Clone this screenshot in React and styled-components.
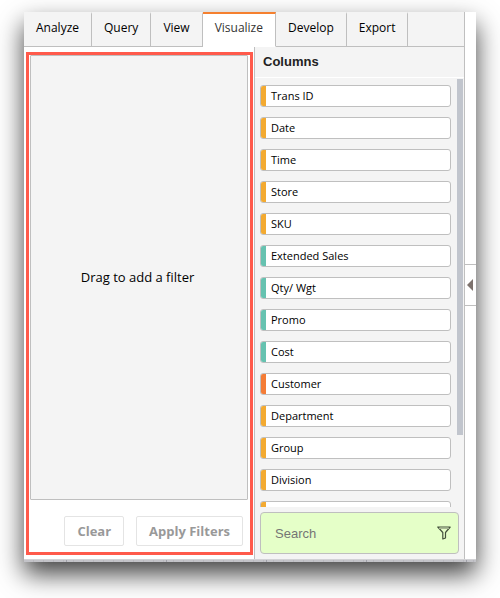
import React, { useState } from 'react';
import styled, { createGlobalStyle } from 'styled-components';

const GlobalStyle = createGlobalStyle`
  * {
    box-sizing: border-box;
  }

  body {
    margin: 0;
    background: #fff;
    color: #000;
    font-family: 'Open Sans', 'Noto Sans', sans-serif;
    font-size: 12px;
  }
`;

const line = '#bfbfbf';
const panel = '#f4f4f4';

const kinds = {
  attribute: '#f3aa31',
  measure: '#66c2b0',
  key: '#f47c36'
};

const Page = styled.div`
  display: flex;
  height: 100vh;
  padding: 12px 24px 36px;
`;

const Window = styled.div`
  flex: 1;
  min-width: 0;
  display: flex;
  flex-direction: column;
  background: #fff;
  box-shadow: 0 12px 24px rgba(0, 0, 0, 0.75);
`;

const Content = styled.div`
  flex: 1;
  min-height: 0;
  display: flex;
`;

const Main = styled.main`
  flex: 1;
  min-width: 0;
  display: flex;
  flex-direction: column;
  border-right: 1px solid ${line};
`;

const Tabs = styled.nav`
  display: flex;
  height: 35px;
  background: ${panel};

  &::after {
    content: '';
    flex: 1;
    border-bottom: 1px solid ${line};
  }
`;

const Tab = styled.button`
  padding: 0 12px 6px;
  border: 0;
  border-top: 2px solid ${p => (p.$active ? '#f5802f' : 'transparent')};
  border-right: 1px solid ${line};
  border-bottom: 1px solid ${p => (p.$active ? '#fff' : line)};
  background: ${p => (p.$active ? '#fff' : panel)};
  color: ${p => (p.$active ? '#333' : '#000')};
  font: inherit;
`;

const Panels = styled.div`
  flex: 1;
  min-height: 0;
  display: flex;
`;

const FilterPanel = styled.section`
  flex: 1;
  display: flex;
  flex-direction: column;
  margin: 5px 1px 4px 2px;
  border: 3px solid #ff5a4b;
`;

const DropZone = styled.div`
  flex: 1;
  display: flex;
  align-items: center;
  justify-content: center;
  margin: 0 2px 0 1px;
  padding: 0 3px 2px 0;
  border: 1px solid ${line};
  border-radius: 1px;
  background: ${panel};
  font-size: 13px;
`;

const Actions = styled.div`
  display: flex;
  justify-content: flex-end;
  gap: 12px;
  padding: 16px 7px 6px;
`;

const Button = styled.button`
  height: 30px;
  padding: 0 12px;
  border: 1px solid #e4e4e4;
  border-radius: 2px;
  background: #fff;
  color: #999;
  font: inherit;
  font-size: 13px;
  font-weight: 700;
`;

const ColumnPanel = styled.section`
  width: 210px;
  display: flex;
  flex-direction: column;
  border-left: 1px solid ${line};
  background: ${panel};
`;

const Heading = styled.h2`
  margin: 0;
  padding: 0 8px;
  border-bottom: 1px solid #fff;
  font: bold 13px/30px 'Liberation Sans', sans-serif;
  color: #222;
`;

const Scroller = styled.div`
  flex: 1;
  min-height: 0;
  display: flex;
`;

const List = styled.ul`
  flex: 1;
  margin: 0;
  padding: 7px 6px 0 5px;
  overflow-y: auto;
  scrollbar-width: none;
  list-style: none;
`;

const Thumb = styled.div`
  width: 6px;
  height: 83%;
  margin: 1px 1px 0 0;
  background: #c1c5cd;
`;

const Column = styled.li`
  display: flex;
  height: 22px;
  margin-bottom: 10px;
  border: 1px solid ${line};
  border-radius: 3px;
  background: #fff;
  overflow: hidden;
  font-size: 11px;
  line-height: 20px;

  &::before {
    content: '';
    width: 5px;
    margin-right: 5px;
    background: ${p => kinds[p.$kind]};
  }
`;

const SearchBox = styled.label`
  display: flex;
  align-items: center;
  height: 42px;
  margin: 5px;
  padding: 0 7px 0 14px;
  border: 1px solid ${line};
  border-radius: 4px;
  background: #e5ffc8;
`;

const SearchInput = styled.input`
  flex: 1;
  min-width: 0;
  padding: 0;
  border: 0;
  outline: 0;
  background: transparent;
  font: 13px 'Liberation Sans', sans-serif;

  &::placeholder {
    color: #757575;
  }
`;

const Gutter = styled.aside`
  width: 11px;
  display: flex;
  flex-direction: column;
  justify-content: center;
  padding-bottom: 2px;
`;

const Toggle = styled.button`
  display: flex;
  align-items: center;
  justify-content: center;
  height: 42px;
  padding: 0 1px 0 0;
  border: solid ${line};
  border-width: 1px 0;
  background: #fff;
`;

const Ruler = styled.div`
  height: 3px;
  border-top: 1px solid #d2d2d5;
  background:
    repeating-linear-gradient(90deg, transparent 0 42px, #a0a0a8 42px 43px, transparent 43px 100px),
    repeating-linear-gradient(90deg, #c3c3c8 0 9px, #b8b8be 9px 10px);
`;

const FunnelIcon = () => (
  <svg width="14" height="14" viewBox="0 0 14 14" aria-hidden="true">
    <path
      d="M.8 1h12.4L8.5 6.5V12L5.8 13V6.5z"
      fill="none"
      stroke="#44503c"
      strokeWidth="1.2"
      strokeLinejoin="round"
    />
    <path d="M2 2.5h10" stroke="#a9b895" />
  </svg>
);

const tabs = ['Analyze', 'Query', 'View', 'Visualize', 'Develop', 'Export'];

const columns = [
  { name: 'Trans ID', kind: 'attribute' },
  { name: 'Date', kind: 'attribute' },
  { name: 'Time', kind: 'attribute' },
  { name: 'Store', kind: 'attribute' },
  { name: 'SKU', kind: 'attribute' },
  { name: 'Extended Sales', kind: 'measure' },
  { name: 'Qty/ Wgt', kind: 'measure' },
  { name: 'Promo', kind: 'measure' },
  { name: 'Cost', kind: 'measure' },
  { name: 'Customer', kind: 'key' },
  { name: 'Department', kind: 'attribute' },
  { name: 'Group', kind: 'attribute' },
  { name: 'Division', kind: 'attribute' },
  { name: '', kind: 'attribute' }
];

const App = () => {
  const [active, setActive] = useState('Visualize');
  const [search, setSearch] = useState('');

  return (
    <Page>
      <GlobalStyle />
      <Window>
        <Content>
          <Main>
            <Tabs>
              {tabs.map(tab => (
                <Tab
                  key={tab}
                  type="button"
                  $active={tab === active}
                  onClick={() => setActive(tab)}
                >
                  {tab}
                </Tab>
              ))}
            </Tabs>
            <Panels>
              <FilterPanel>
                <DropZone>Drag to add a filter</DropZone>
                <Actions>
                  <Button type="button">Clear</Button>
                  <Button type="button">Apply Filters</Button>
                </Actions>
              </FilterPanel>
              <ColumnPanel>
                <Heading>Columns</Heading>
                <Scroller>
                  <List>
                    {columns.map(({ name, kind }, i) => (
                      <Column key={i} $kind={kind} draggable>
                        {name}
                      </Column>
                    ))}
                  </List>
                  <Thumb />
                </Scroller>
                <SearchBox>
                  <SearchInput
                    type="text"
                    placeholder="Search"
                    aria-label="Search"
                    value={search}
                    onChange={e => setSearch(e.target.value)}
                  />
                  <FunnelIcon />
                </SearchBox>
              </ColumnPanel>
            </Panels>
          </Main>
          <Gutter>
            <Toggle type="button" aria-label="Collapse panel">
              <svg width="6" height="12" viewBox="0 0 6 12" aria-hidden="true">
                <path d="M6 0v12L0 6z" fill="#7d726d" />
              </svg>
            </Toggle>
          </Gutter>
        </Content>
        <Ruler />
      </Window>
    </Page>
  );
};

export default App;
